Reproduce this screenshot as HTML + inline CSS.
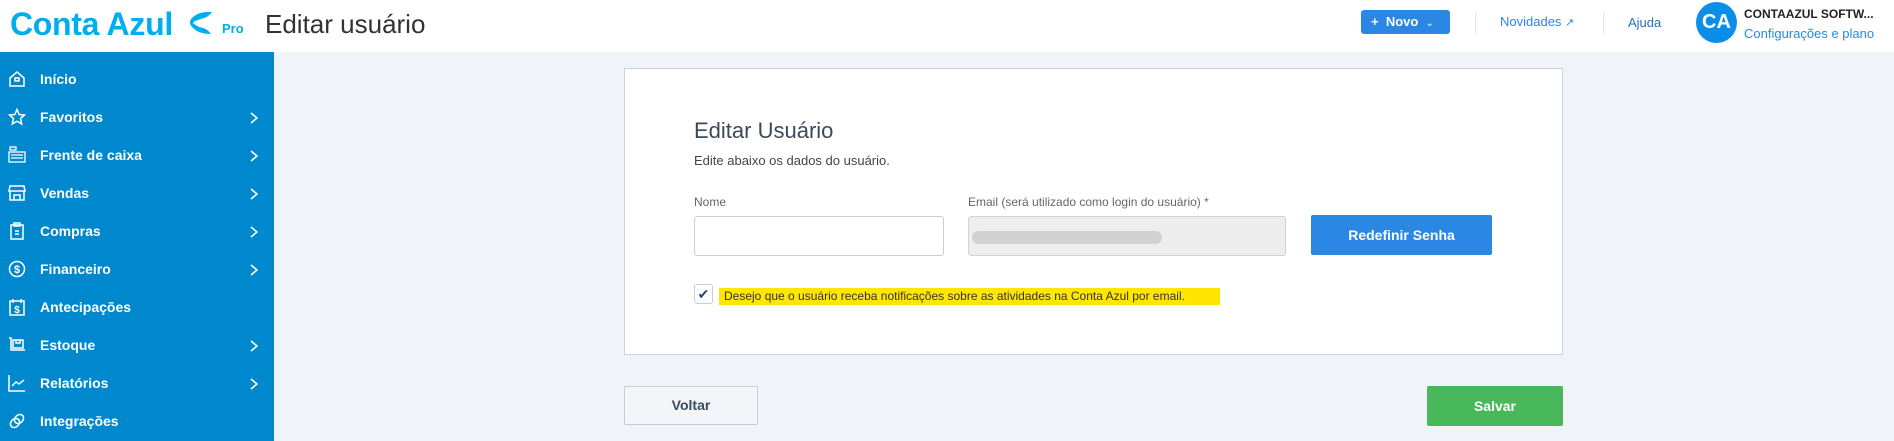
<!DOCTYPE html>
<html><head><meta charset="utf-8"><style>
*{box-sizing:border-box;margin:0;padding:0}
body{width:1894px;height:441px;overflow:hidden;background:#f0f3f8;font-family:"Liberation Sans",sans-serif;position:relative}
.hdr{position:absolute;left:0;top:0;width:1894px;height:52px;background:#fff}
.abs{position:absolute;white-space:nowrap}
.side{position:absolute;left:0;top:52px;width:274px;height:389px;background:#0088cf}
.item{position:absolute;left:0;width:274px;height:38px;color:#fff;font-weight:bold;font-size:14px}
.item span{position:absolute;left:40px;top:11px}
.item svg.ic{position:absolute;left:8px;top:10px}
.item svg.ch{position:absolute;left:249px;top:13px}
.card{position:absolute;left:624px;top:68px;width:939px;height:287px;background:#fff;border:1px solid #ccd3dc}
</style></head><body>
<div class="hdr">
  <div class="abs" style="left:10px;top:6px;font-size:32px;font-weight:bold;color:#00aeef;letter-spacing:-0.3px">Conta Azul</div>
  <svg class="abs" style="left:187px;top:11px" width="26" height="24" viewBox="0 0 26 24"><path d="M25 1 Q12 0 5 7 Q1 11 5 16 Q11 23 24 23 Q20 17 12 16 L7 13 Q5 12 8 10 L14 8 Q22 6 25 1Z" fill="#00aeef"/></svg>
  <div class="abs" style="left:222px;top:21px;font-size:13px;font-weight:bold;color:#00aeef">Pro</div>
  <div class="abs" style="left:265px;top:9px;font-size:26px;color:#333">Editar usuário</div>
  <div class="abs" style="left:1361px;top:10px;width:89px;height:24px;background:#2a87e4;border-radius:3px;color:#fff;font-size:13px;font-weight:bold;line-height:24px;padding-left:10px">+&nbsp; Novo&nbsp; <span style="font-weight:normal;font-size:10px">&#8964;</span></div>
  <div class="abs" style="left:1475px;top:12px;width:1px;height:22px;background:#e3e6ea"></div>
  <div class="abs" style="left:1500px;top:14px;font-size:13px;color:#2a87e4">Novidades <span style="font-size:11px">&#x2197;</span></div>
  <div class="abs" style="left:1603px;top:12px;width:1px;height:22px;background:#e3e6ea"></div>
  <div class="abs" style="left:1628px;top:15px;font-size:13px;color:#2a6fc4">Ajuda</div>
  <div class="abs" style="left:1696px;top:2px;width:41px;height:41px;border-radius:50%;background:#0a8ee8;color:#fff;font-weight:bold;font-size:20px;line-height:41px;text-align:center">CA</div>
  <div class="abs" style="left:1744px;top:7px;font-size:12px;font-weight:bold;color:#222">CONTAAZUL SOFTW...</div>
  <div class="abs" style="left:1744px;top:26px;font-size:13px;color:#2a87e4">Configurações e plano</div>
</div>
<div class="side">
  <div class="item" style="top:8px"><svg class="ic" width="18" height="18" viewBox="0 0 18 18" fill="none" stroke="#fff" stroke-width="1.5"><path d="M2 8 L9 2 L16 8 V16 H2Z"/><rect x="7" y="8" width="4" height="3"/></svg><span>Início</span></div>
  <div class="item" style="top:46px"><svg class="ic" width="18" height="18" viewBox="0 0 18 18" fill="none" stroke="#fff" stroke-width="1.5"><path d="M9 1.5 L11.2 6.5 L16.5 7 L12.5 10.5 L13.7 16 L9 13.2 L4.3 16 L5.5 10.5 L1.5 7 L6.8 6.5Z"/></svg><span>Favoritos</span><svg class="ch" width="10" height="14" viewBox="0 0 10 14"><path d="M2 2 L8 7 L2 12" fill="none" stroke="#fff" stroke-width="1.6"/></svg></div>
  <div class="item" style="top:84px"><svg class="ic" width="18" height="18" viewBox="0 0 18 18" fill="none" stroke="#fff" stroke-width="1.3"><rect x="2" y="1" width="6" height="3"/><rect x="1" y="6" width="16" height="10"/><path d="M3 9h12M3 12h12"/></svg><span>Frente de caixa</span><svg class="ch" width="10" height="14" viewBox="0 0 10 14"><path d="M2 2 L8 7 L2 12" fill="none" stroke="#fff" stroke-width="1.6"/></svg></div>
  <div class="item" style="top:122px"><svg class="ic" width="18" height="18" viewBox="0 0 18 18" fill="none" stroke="#fff" stroke-width="1.5"><path d="M2 2h14l1 5H1Z M2 7v9h14V7 M6 16v-5h6v5"/></svg><span>Vendas</span><svg class="ch" width="10" height="14" viewBox="0 0 10 14"><path d="M2 2 L8 7 L2 12" fill="none" stroke="#fff" stroke-width="1.6"/></svg></div>
  <div class="item" style="top:160px"><svg class="ic" width="18" height="18" viewBox="0 0 18 18" fill="none" stroke="#fff" stroke-width="1.5"><rect x="3" y="3" width="12" height="14"/><rect x="6" y="1" width="6" height="3"/><path d="M7 9h4M7 12h4"/></svg><span>Compras</span><svg class="ch" width="10" height="14" viewBox="0 0 10 14"><path d="M2 2 L8 7 L2 12" fill="none" stroke="#fff" stroke-width="1.6"/></svg></div>
  <div class="item" style="top:198px"><svg class="ic" width="18" height="18" viewBox="0 0 18 18"><circle cx="9" cy="9" r="7.5" fill="none" stroke="#fff" stroke-width="1.5"/><text x="9" y="13" font-size="11" fill="#fff" text-anchor="middle" font-family="Liberation Sans">$</text></svg><span>Financeiro</span><svg class="ch" width="10" height="14" viewBox="0 0 10 14"><path d="M2 2 L8 7 L2 12" fill="none" stroke="#fff" stroke-width="1.6"/></svg></div>
  <div class="item" style="top:236px"><svg class="ic" width="18" height="18" viewBox="0 0 18 18"><rect x="2" y="3" width="14" height="14" fill="none" stroke="#fff" stroke-width="1.5"/><path d="M5 1v4M13 1v4" stroke="#fff" stroke-width="1.5"/><text x="9" y="15" font-size="10" fill="#fff" text-anchor="middle" font-family="Liberation Sans">$</text></svg><span>Antecipações</span></div>
  <div class="item" style="top:274px"><svg class="ic" width="18" height="18" viewBox="0 0 18 18" fill="none" stroke="#fff" stroke-width="1.5"><path d="M1 2h2v12h14M5 4h10v8H5Z M8 4v3h4V4"/></svg><span>Estoque</span><svg class="ch" width="10" height="14" viewBox="0 0 10 14"><path d="M2 2 L8 7 L2 12" fill="none" stroke="#fff" stroke-width="1.6"/></svg></div>
  <div class="item" style="top:312px"><svg class="ic" width="18" height="18" viewBox="0 0 18 18" fill="none" stroke="#fff" stroke-width="1.5"><path d="M1 1v16h16M4 12l4-4 3 2 5-4"/></svg><span>Relatórios</span><svg class="ch" width="10" height="14" viewBox="0 0 10 14"><path d="M2 2 L8 7 L2 12" fill="none" stroke="#fff" stroke-width="1.6"/></svg></div>
  <div class="item" style="top:350px"><svg class="ic" width="18" height="18" viewBox="0 0 18 18" fill="none" stroke="#fff" stroke-width="1.5"><ellipse cx="7" cy="11" rx="4" ry="5" transform="rotate(45 7 11)"/><ellipse cx="11" cy="7" rx="4" ry="5" transform="rotate(45 11 7)"/></svg><span>Integrações</span></div>
</div>
<div class="card"></div>
<div class="abs" style="left:694px;top:118px;font-size:22px;color:#3a4a5c">Editar Usuário</div>
<div class="abs" style="left:694px;top:153px;font-size:13px;color:#444">Edite abaixo os dados do usuário.</div>
<div class="abs" style="left:694px;top:195px;font-size:12px;color:#666">Nome</div>
<div class="abs" style="left:968px;top:195px;font-size:12px;color:#666">Email (será utilizado como login do usuário) *</div>
<div class="abs" style="left:694px;top:216px;width:250px;height:40px;background:#fff;border:1px solid #c8cdd3;border-radius:3px"></div>
<div class="abs" style="left:968px;top:216px;width:318px;height:40px;background:#ededed;border:1px solid #d0d3d6;border-radius:3px"><div style="position:absolute;left:3px;top:14px;width:190px;height:13px;background:#d0d1d3;border-radius:7px"></div></div>
<div class="abs" style="left:1311px;top:215px;width:181px;height:40px;background:#2a87e4;border-radius:2px;color:#fff;font-weight:bold;font-size:14px;line-height:40px;text-align:center">Redefinir Senha</div>
<div class="abs" style="left:694px;top:284px;width:19px;height:20px;border:1px solid #c8cdd3;border-radius:3px;background:#fff;color:#2c4a6e;font-size:14px;line-height:18px;text-align:center">&#10004;</div>
<div class="abs" style="left:719px;top:288px;width:501px;height:17px;background:#ffe600;font-size:12px;color:#333;line-height:17px;padding-left:5px">Desejo que o usuário receba notificações sobre as atividades na Conta Azul por email.</div>
<div class="abs" style="left:624px;top:386px;width:134px;height:39px;background:#f3f5f8;border:1px solid #c8cdd3;border-radius:2px;font-weight:bold;font-size:14px;color:#3a4a5c;line-height:37px;text-align:center">Voltar</div>
<div class="abs" style="left:1427px;top:386px;width:136px;height:40px;background:#48b85a;border-radius:2px;font-weight:bold;font-size:14px;color:#fff;line-height:40px;text-align:center">Salvar</div>
</body></html>
